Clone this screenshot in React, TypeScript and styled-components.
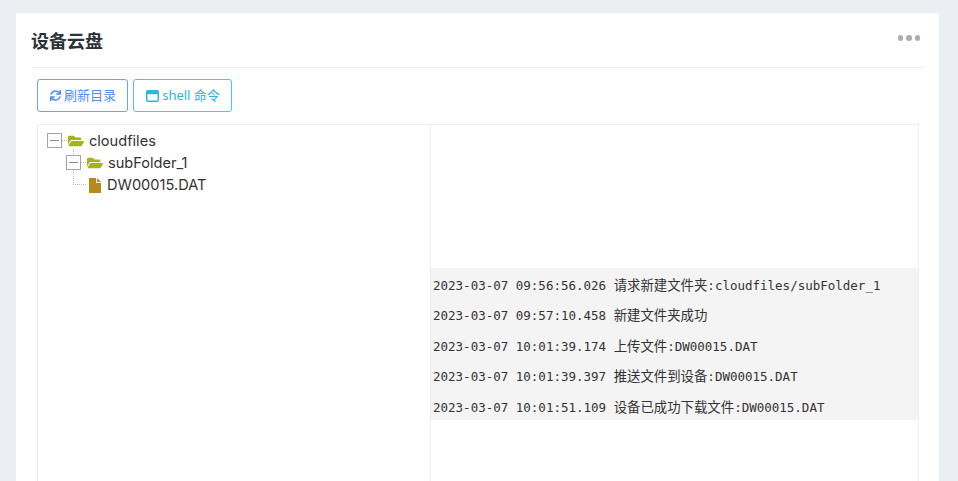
import React from "react";
import styled, { createGlobalStyle } from "styled-components";
import { FaSync, FaFolderOpen } from "react-icons/fa";

const Global = createGlobalStyle`
  html, body { margin: 0; height: 481px; overflow: hidden; background: #ebeef3; }
  #root { height: 481px; overflow: hidden; }
  * { box-sizing: border-box; }
`;

const Page = styled.div`
  padding: 13px 19px 0 16px;
  font-family: "Noto Sans", "Noto Sans CJK SC", sans-serif;
`;
const Card = styled.section`
  background: #fff;
  height: 600px;
  padding: 0 16px 0 16px;
  border-radius: 2px;
`;
const Header = styled.header`
  height: 55px;
  display: flex;
  align-items: center;
  justify-content: space-between;
  border-bottom: 1px solid #eeeff1;
`;
const Title = styled.h2`
  margin: 0 0 0 -1px;
  font: 700 18px/24px "Noto Sans CJK SC", sans-serif;
  color: #2d3138;
`;
const Dots = styled.div`
  display: flex;
  gap: 3px;
  margin: 0 3px 4px 0;
`;
const Dot = styled.span`
  width: 5.5px;
  height: 5.5px;
  border-radius: 50%;
  background: #a9b0b4;
`;
const Toolbar = styled.div`
  display: flex;
  gap: 5px;
  padding: 11px 0 0 5px;
`;
const Btn = styled.button<{ $c: string; $b: string; $w: number }>`
  width: ${p => p.$w}px;
  height: 33px;
  display: flex;
  align-items: center;
  justify-content: center;
  gap: 3px;
  padding: 0 0 0 1px;
  background: #fff;
  color: ${p => p.$c};
  border: 1px solid ${p => p.$b};
  border-radius: 3px;
  font: 400 13px/1 "Noto Sans", "Noto Sans CJK SC", sans-serif;
  svg { flex: none; }
`;
const Panel = styled.div`
  margin: 12px 4px 0 5px;
  height: 500px;
  display: grid;
  grid-template-columns: 393px 1fr;
  border: 1px solid #eeeeee;
`;
const TreePane = styled.div`
  border-right: 1px solid #eeeeee;
  padding: 5px 0 0 9px;
`;
const TreeRow = styled.div<{ $indent?: number }>`
  height: 22px;
  display: flex;
  align-items: center;
  margin-left: ${p => p.$indent ?? 0}px;
  font: 400 14.6px/22px Inter, sans-serif;
  color: #333;
  svg { overflow: visible; }
`;
const NodeIcon = styled.span<{ $c: string }>`
  display: flex;
  color: ${p => p.$c};
  margin-right: 5px;
`;
const LogPane = styled.div`
  padding-top: 143px;
`;
const LogList = styled.div`
  background: #f4f4f4;
`;
const LogRow = styled.div`
  height: 30.4px;
  line-height: 32px;
  padding-left: 2px;
  color: #333;
  white-space: pre;
`;
const Mono = styled.span`
  font-family: "DejaVu Sans Mono", monospace;
  font-size: 12.5px;
`;
const Cjk = styled.span`
  font-family: "Noto Sans CJK SC", sans-serif;
  font-size: 13.4px;
`;

const Toggle = ({ stem }: { stem?: boolean }) => (
  <svg width="21" height="22" viewBox="0 0 21 22" fill="none">
    {stem && <path d="M7.5 -3V3" stroke="#bbb" strokeDasharray="1 1" />}
    <rect x="0.5" y="3.5" width="14" height="14" fill="#fff" stroke="#a4a4a4" />
    <path d="M3 10.5h9" stroke="#8a8a8a" />
    <path d="M15 10.5h5" stroke="#bbb" strokeDasharray="1 1" />
  </svg>
);
const Elbow = () => (
  <svg width="22" height="22" viewBox="0 0 22 22" fill="none">
    <path d="M7.5 -4v14.5H20" stroke="#bbb" strokeDasharray="1 1" />
  </svg>
);
const FileIcon = () => (
  <svg width="14" height="15" viewBox="0 0 14 15">
    <path d="M1 0h7v5h5v10H1z M9 0l4 4H9z" fill="#b8891b" />
  </svg>
);
const WindowIcon = () => (
  <svg width="13" height="12" viewBox="0 0 13 12" fill="none">
    <rect x="0.75" y="0.75" width="11.5" height="10.5" rx="1" stroke="currentColor" strokeWidth="1.5" />
    <rect x="0.75" y="0.75" width="11.5" height="3.5" fill="currentColor" />
  </svg>
);

const logs: [string, string, string][] = [
  ["2023-03-07 09:56:56.026 ", "请求新建文件夹", ":cloudfiles/subFolder_1"],
  ["2023-03-07 09:57:10.458 ", "新建文件夹成功", ""],
  ["2023-03-07 10:01:39.174 ", "上传文件", ":DW00015.DAT"],
  ["2023-03-07 10:01:39.397 ", "推送文件到设备", ":DW00015.DAT"],
  ["2023-03-07 10:01:51.109 ", "设备已成功下载文件", ":DW00015.DAT"],
];

export default function App() {
  return (
    <Page>
      <Global />
      <Card>
        <Header>
          <Title>设备云盘</Title>
          <Dots><Dot /><Dot /><Dot /></Dots>
        </Header>
        <Toolbar>
          <Btn $w={91} $c="#4d8cff" $b="#6f9fff"><FaSync size={11} />刷新目录</Btn>
          <Btn $w={99} $c="#2eb6dc" $b="#4fc5e6"><WindowIcon />shell 命令</Btn>
        </Toolbar>
        <Panel>
          <TreePane>
            <TreeRow>
              <Toggle />
              <NodeIcon $c="#a6b41c"><FaFolderOpen size={16} /></NodeIcon>
              cloudfiles
            </TreeRow>
            <TreeRow $indent={19}>
              <Toggle stem />
              <NodeIcon $c="#a6b41c"><FaFolderOpen size={16} /></NodeIcon>
              subFolder_1
            </TreeRow>
            <TreeRow $indent={19}>
              <Elbow />
              <NodeIcon $c="#b8891b"><FileIcon /></NodeIcon>
              DW00015.DAT
            </TreeRow>
          </TreePane>
          <LogPane>
            <LogList>
              {logs.map(([t, m, s]) => (
                <LogRow key={t}>
                  <Mono>{t}</Mono><Cjk>{m}</Cjk>{s && <Mono>{s}</Mono>}
                </LogRow>
              ))}
            </LogList>
          </LogPane>
        </Panel>
      </Card>
    </Page>
  );
}
